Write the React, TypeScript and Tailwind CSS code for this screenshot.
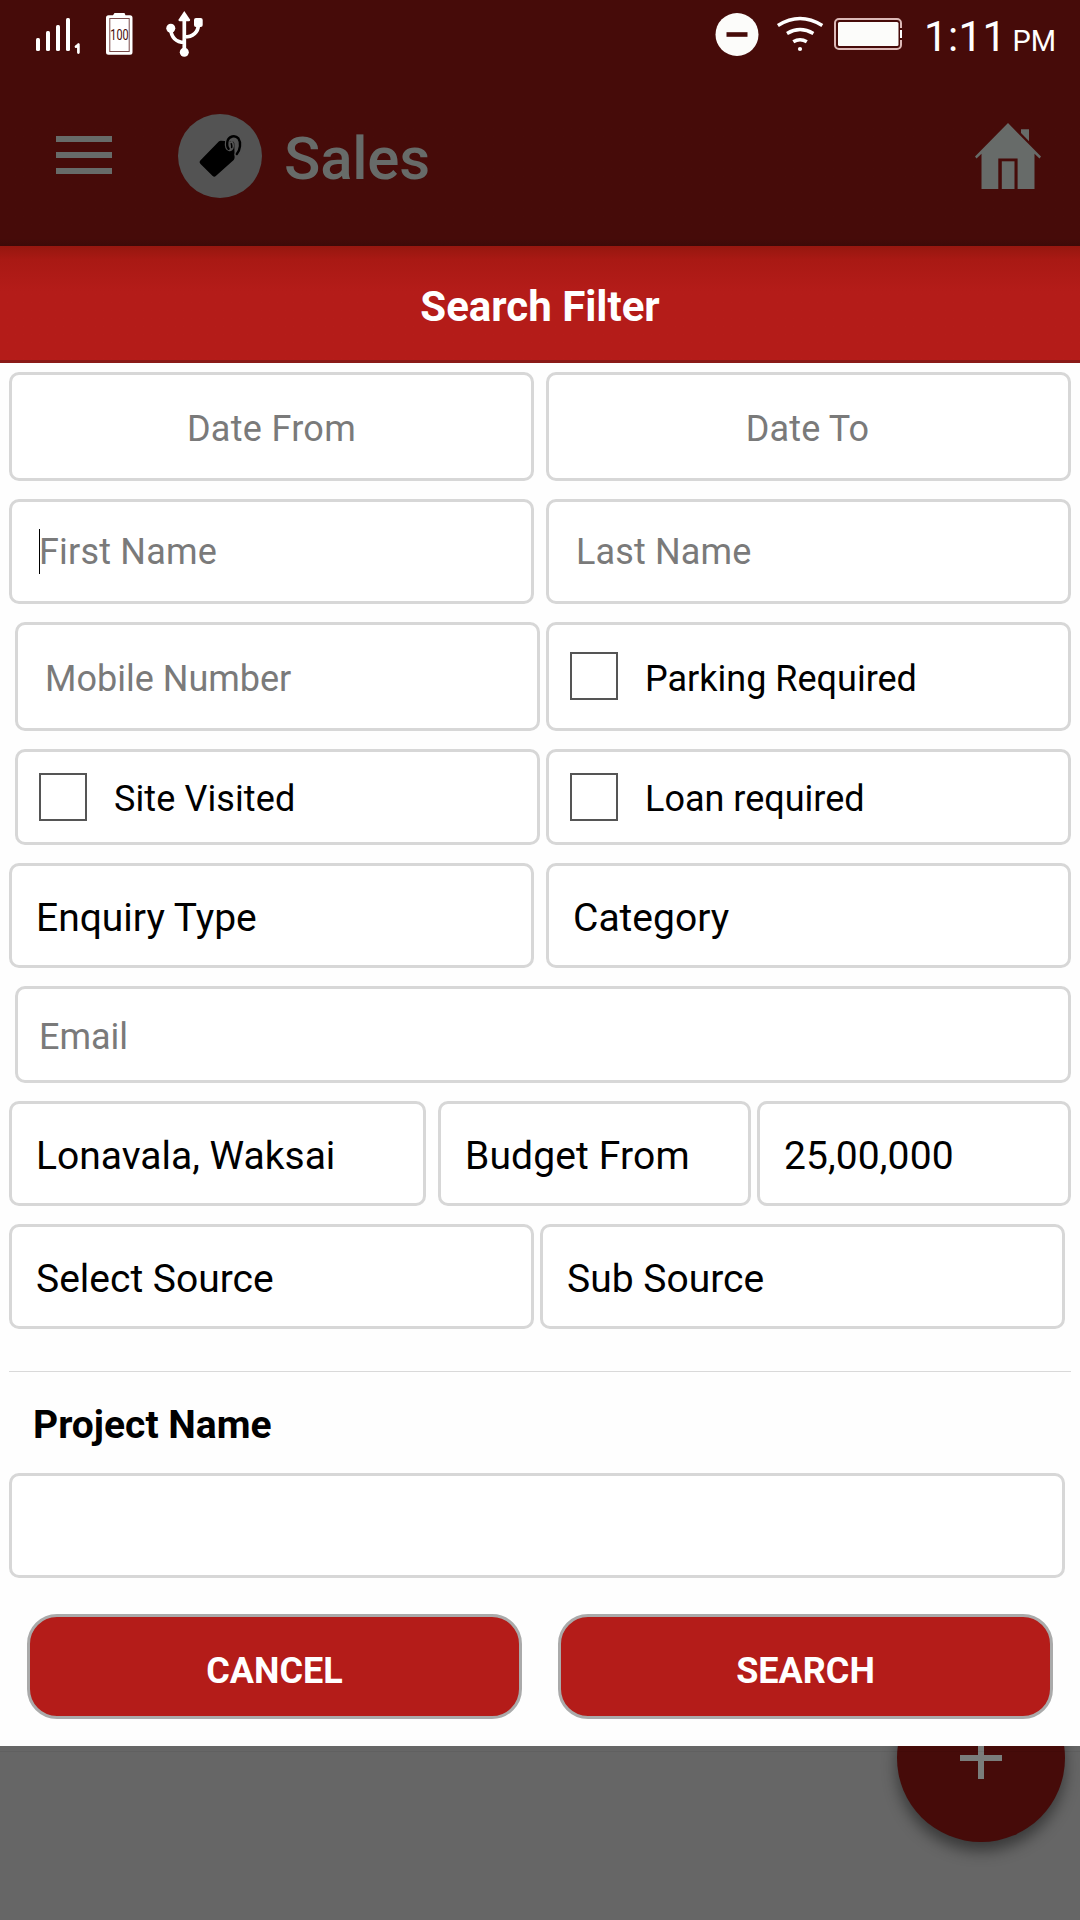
import type { ReactNode } from "react";

function SignalIcon() {
  return (
    <svg className="h-[66px] w-[46px]" viewBox="36 0 46 66" fill="#fff">
      <rect x="36" y="38" width="4" height="13" rx="1.5" />
      <rect x="46" y="31" width="4" height="20" rx="1.5" />
      <rect x="56" y="25" width="4" height="26" rx="1.5" />
      <rect x="66" y="18" width="4" height="33" rx="1.5" />
      <path d="M78.4 44.6V52.6M78.4 44.8L76 46.6" stroke="#fff" strokeWidth="2.7" fill="none" strokeLinecap="round" />
    </svg>
  );
}

function BatteryFullIcon() {
  return (
    <svg className="ml-6 h-[66px] w-[27px] overflow-visible" viewBox="106 0 27 66">
      <path d="M114.5 13h10l1 2.2h4.5a2.5 2.5 0 0 1 2.5 2.5v34.500a2.500 2.500 0 0 1-2.500 2.500h-21.500a2.500 2.500 0 0 1-2.500-2.500v-34.500a2.500 2.500 0 0 1 2.500-2.500h4.500z" fill="#fff" />
      <rect x="109.800" y="18.500" width="19.400" height="33" fill="none" stroke="#7a4a4a" strokeWidth="1" />
      <text transform="translate(119.500 40.300) scale(0.7 1)" textAnchor="middle" fontFamily="Roboto, sans-serif" fontSize="15.500" fill="#460b09">
        100
      </text>
    </svg>
  );
}

function UsbIcon() {
  return (
    <svg className="ml-[33px] h-[66px] w-[38px]" viewBox="166 0 38 66" fill="#fff">
      <path d="M184.300 11l5.700 8.600q0.600 1.600-1 1.600h-9.400q-1.600 0-1-1.600z" />
      <circle cx="184.300" cy="52.300" r="4.500" />
      <circle cx="170.800" cy="28.300" r="4.500" />
      <rect x="194" y="18" width="8.700" height="9" rx="2" />
      <path d="M184.300 18V50M170.800 29C171 37 176 42.400 184.300 42.400M198.300 25C198.300 32 193 37 184.300 37" fill="none" stroke="#fff" strokeWidth="3.700" />
    </svg>
  );
}

function DndIcon() {
  return (
    <svg className="h-[66px] w-11" viewBox="715.500 0 44 66">
      <circle cx="737.500" cy="34.500" r="21.500" fill="#fcfcfa" />
      <rect x="727" y="32.200" width="21" height="4.600" fill="#460b09" />
    </svg>
  );
}

function WifiIcon() {
  return (
    <svg className="ml-[17px] h-[66px] w-12" viewBox="776 0 48 66" fill="none" stroke="#fff" strokeWidth="3.500">
      <path d="M777.900 25.600Q800 11.600 822.300 25.600" />
      <path d="M787 33.500Q800 25.700 813.400 33.500" />
      <path d="M793.300 41.800Q800 37.600 806.800 41.800" />
      <circle cx="800" cy="49" r="2.100" fill="#fff" stroke="none" />
    </svg>
  );
}

function BatteryIcon() {
  return (
    <svg className="ml-2.5 h-[66px] w-[68px]" viewBox="834 0 68 66">
      <path d="M901 28V23a4 4 0 0 0-4-4H839a4 4 0 0 0-4 4V45a4 4 0 0 0 4 4H897a4 4 0 0 0 4-4V40" fill="none" stroke="#dcb9b7" strokeWidth="2" />
      <rect x="838" y="22" width="60.500" height="24" rx="1.500" fill="#fcfcfa" />
      <rect x="900" y="30" width="2" height="8" fill="#fff" />
    </svg>
  );
}

function TagIcon() {
  return (
    <svg className="h-[84px] w-[84px]" viewBox="178 114 84 84" fill="none">
      <path d="M200.300 160.600L218.800 141.500Q219.700 140.700 221 140.800L232.600 141.400Q234.200 141.600 234.300 143.200L234.600 157.600Q234.600 159 233.700 159.900L215.800 176Q214.200 177.400 212.700 175.900L200.300 163.800Q198.700 162.200 200.300 160.600Z" fill="#000" />
      <path d="M236.800 154.500C240.300 150 241 143 238.600 138.800M227.400 141.500C226.900 145 227.200 147.800 229.200 148.600C231 149.200 232.300 147.500 231.400 143.500" stroke="#535353" strokeWidth="4.800" strokeLinecap="round" />
      <path d="M236.800 154C240.400 149.500 241.200 142.500 238.400 138.400C235 134.600 228.800 136.200 227.500 141C226.900 144 227.100 147 228.600 148.800" stroke="#000" strokeWidth="2.400" strokeLinecap="round" />
      <path d="M231.300 143.800C231.700 145 231.900 146.200 231.700 147.500" stroke="#000" strokeWidth="1.500" strokeLinecap="round" />
    </svg>
  );
}

function HomeIcon() {
  return (
    <svg className="h-[66px] w-[66px]" viewBox="975 123 66 66" fill="#676b69">
      <path d="M1008 123L1041 156.600L1039.500 158.500L1034.500 153.700V189H1017.600V158.500H998.300V189H981.500V153.700L976.500 158.500L975 156.600Z" />
      <path d="M1021 129.300H1029V141.300L1021 133Z" />
      <rect x="1001.800" y="161.300" width="12.700" height="27.700" />
    </svg>
  );
}

type FieldProps = { size: string; children?: ReactNode };

function Field({ size, children }: FieldProps) {
  return (
    <div className={`flex shrink-0 items-center rounded-[10px] border-[3px] border-[#d7d7d7] bg-white leading-none whitespace-nowrap ${size}`}>
      {children}
    </div>
  );
}

function Hint({ pos, children }: { pos: string; children: ReactNode }) {
  return <span className={`text-[36px] text-[#7a7a7a] ${pos}`}>{children}</span>;
}

function Choice({ pos = "", children }: { pos?: string; children: ReactNode }) {
  return <span className={`pt-1.5 pl-6 text-[39px] text-black ${pos}`}>{children}</span>;
}

function Check({ boxPos, labelPos, children }: { boxPos: string; labelPos: string; children: ReactNode }) {
  return (
    <>
      <span className={`size-12 border-2 border-[#555] ${boxPos}`} />
      <span className={`pl-[27px] text-[36px] text-black ${labelPos}`}>{children}</span>
    </>
  );
}

export default function App() {
  return (
    <div className="flex h-[1920px] w-[1080px] flex-col overflow-hidden bg-[#666] font-[Roboto,sans-serif]">
      <header className="h-[246px] shrink-0 bg-linear-to-b from-[#460b09] from-97% to-[#3d0a08]">
        <div className="flex h-[66px] items-start pr-[24px] pl-9 text-white">
          <SignalIcon />
          <BatteryFullIcon />
          <UsbIcon />
          <div className="ml-auto flex items-start">
            <DndIcon />
            <WifiIcon />
            <BatteryIcon />
            <div className="ml-[22px] flex h-[73px] w-[132px] items-baseline leading-[73px] whitespace-nowrap">
              <span className="w-[89px] text-[42px] tracking-[0.4px]">1:11</span>
              <span className="text-[29px]">PM</span>
            </div>
          </div>
        </div>
        <div className="flex h-[180px] items-center pr-[39px] pl-14">
          <div className="flex w-14 flex-col gap-2.5 pb-0.5">
            <span className="h-1.5 bg-[#676b69]" />
            <span className="h-1.5 bg-[#676b69]" />
            <span className="h-1.5 bg-[#676b69]" />
          </div>
          <div className="ml-[66px] size-[84px] rounded-full bg-[#535353]">
            <TagIcon />
          </div>
          <h1 className="ml-[22px] pt-1.5 text-[60px] leading-none font-medium tracking-[-0.2px] text-[#676b69]">Sales</h1>
          <div className="ml-auto">
            <HomeIcon />
          </div>
        </div>
      </header>

      <main className="flex h-[1500px] shrink-0 flex-col bg-[#fefefe]">
        <div className="flex h-[117px] shrink-0 items-center justify-center border-b-[3px] border-[#8a1a17] bg-linear-to-b from-[#96170f] via-[#a91914] via-12% to-[#b41c19] to-40% pt-2">
          <h2 className="text-[42px] leading-none font-bold text-white">Search Filter</h2>
        </div>

        <div className="flex flex-col gap-[18px] pt-[9px] pl-[9px]">
          <div className="flex gap-3">
            <Field size="w-[525px] h-[109px] justify-center">
              <Hint pos="pt-1 tracking-[0.3px]">Date From</Hint>
            </Field>
            <Field size="w-[525px] h-[109px] justify-center">
              <Hint pos="pt-1 pr-0.5 tracking-[0.1px]">Date To</Hint>
            </Field>
          </div>
          <div className="flex gap-3">
            <Field size="w-[525px] h-[105px]">
              <span className="ml-[27px] h-[45px] w-px bg-black" />
              <Hint pos="-ml-px pt-px tracking-[0.2px]">First Name</Hint>
            </Field>
            <Field size="w-[525px] h-[105px]">
              <Hint pos="pt-px pl-[27px] tracking-[0.15px]">Last Name</Hint>
            </Field>
          </div>
          <div className="flex gap-1.5 pl-1.5">
            <Field size="w-[525px] h-[109px]">
              <Hint pos="pt-1 pl-[27px]">Mobile Number</Hint>
            </Field>
            <Field size="w-[525px] h-[109px]">
              <Check boxPos="ml-[21px] mb-px" labelPos="pt-1">Parking Required</Check>
            </Field>
          </div>
          <div className="flex gap-1.5 pl-1.5">
            <Field size="w-[525px] h-[96px]">
              <Check boxPos="ml-[21px]" labelPos="pt-[3px] tracking-[0.1px]">Site Visited</Check>
            </Field>
            <Field size="w-[525px] h-[96px]">
              <Check boxPos="ml-[21px]" labelPos="pt-[3px]">Loan required</Check>
            </Field>
          </div>
          <div className="flex gap-3">
            <Field size="w-[525px] h-[105px]">
              <Choice>Enquiry Type</Choice>
            </Field>
            <Field size="w-[525px] h-[105px]">
              <Choice>Category</Choice>
            </Field>
          </div>
          <div className="pl-1.5">
            <Field size="w-[1056px] h-[97px]">
              <Hint pos="pt-1 pl-[21px]">Email</Hint>
            </Field>
          </div>
          <div className="flex">
            <Field size="w-[417px] h-[105px]">
              <Choice>Lonavala, Waksai</Choice>
            </Field>
            <Field size="ml-3 w-[313px] h-[105px]">
              <Choice pos="tracking-[0.15px]">Budget From</Choice>
            </Field>
            <Field size="ml-1.5 w-[314px] h-[105px]">
              <Choice pos="tracking-[0.1px]">25,00,000</Choice>
            </Field>
          </div>
          <div className="flex gap-1.5">
            <Field size="w-[525px] h-[105px]">
              <Choice>Select Source</Choice>
            </Field>
            <Field size="w-[525px] h-[105px]">
              <Choice>Sub Source</Choice>
            </Field>
          </div>
        </div>

        <div className="mx-[9px] mt-[42px] h-px shrink-0 bg-[#d9d9d9]" />
        <h3 className="mt-[33px] ml-[33px] h-[68px] shrink-0 text-[39px] leading-[40px] font-bold text-black">Project Name</h3>
        <div className="pl-[9px]">
          <Field size="w-[1056px] h-[105px]" />
        </div>
        <div className="mt-9 flex gap-9 pl-[27px]">
          <button className="h-[105px] w-[495px] rounded-[30px] border-[3px] border-[#aaa] bg-[#b41c19] pt-2 text-[36px] leading-none font-bold text-white">CANCEL</button>
          <button className="h-[105px] w-[495px] rounded-[30px] border-[3px] border-[#aaa] bg-[#b41c19] pt-2 text-[36px] leading-none font-bold text-white">SEARCH</button>
        </div>
      </main>

      <div className="relative flex-1 overflow-hidden">
        <div className="absolute -top-[72px] right-[15px] flex size-[168px] items-center justify-center rounded-full bg-[#460b09] shadow-[0_9px_15px_rgba(0,0,0,0.45)]">
          <span className="absolute h-1.5 w-[42px] bg-[#7a7d7b]" />
          <span className="absolute h-[42px] w-1.5 bg-[#7a7d7b]" />
        </div>
        <div className="absolute top-[5px] h-px w-full bg-black/5" />
      </div>
    </div>
  );
}
